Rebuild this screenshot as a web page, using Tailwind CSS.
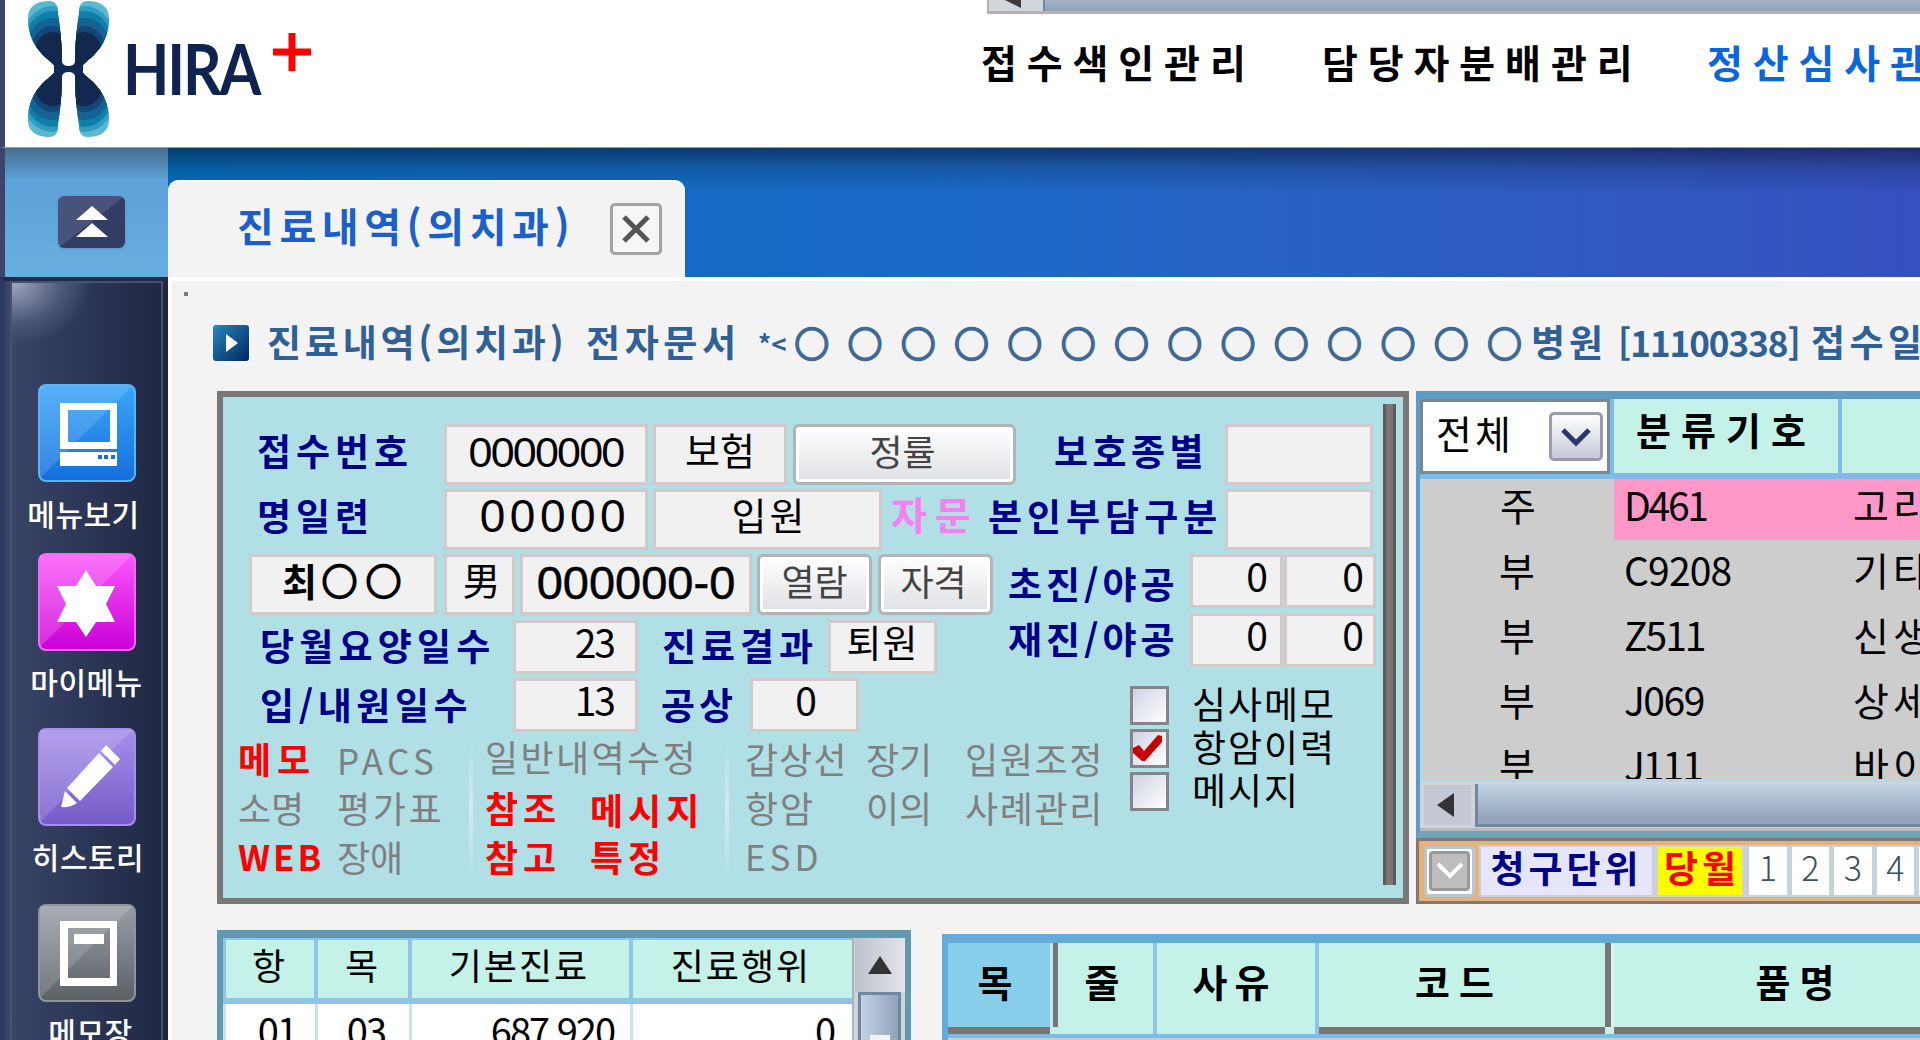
<!DOCTYPE html>
<html lang="ko">
<head>
<meta charset="utf-8">
<title>HIRA+</title>
<script src="https://cdn.jsdelivr.net/npm/@tailwindcss/browser@4"></script>
</head>
<body class="overflow-hidden bg-[#f3f3f3]">
<div class="flex h-[1040px] w-[1920px] flex-col overflow-hidden whitespace-nowrap bg-[#f3f3f3] font-['Noto_Sans_CJK_KR',sans-serif] text-[38px] leading-none text-black **:shrink-0">

  <!-- header -->
  <header class="flex h-[148px] border-b border-[#8aa3b8] border-l-[5px] border-l-[#3c446c] bg-white">
    <svg class="ml-[22px] h-[138px] w-[84px]" viewBox="0 0 84 138">
      <defs>
        <clipPath id="lobe"><path d="M1 18C1 5 12 1 22 1C29 1 31 5 31 14C34 34 35 48 35 65H27C22 59 1 48 1 18Z"/></clipPath>
        <g id="quarter" clip-path="url(#lobe)">
          <rect width="42" height="70" fill="#5bb8d3"/>
          <ellipse cx="25" cy="48" rx="32" ry="42" fill="#2f9dc0"/>
          <ellipse cx="25" cy="49" rx="29" ry="38" fill="#0f7fa9"/>
          <ellipse cx="25" cy="50" rx="26" ry="32" fill="#156394"/>
          <ellipse cx="25" cy="51" rx="21" ry="25" fill="#14467a"/>
          <ellipse cx="26" cy="52" rx="18" ry="20" fill="#12284f"/>
        </g>
      </defs>
      <use href="#quarter"/>
      <use href="#quarter" transform="translate(83 0) scale(-1 1)"/>
      <use href="#quarter" transform="translate(0 138) scale(1 -1)"/>
      <use href="#quarter" transform="translate(83 138) scale(-1 -1)"/>
      <path d="M27 63Q33 66 35 62Q36 66 41.500 66Q47 66 48 62Q50 66 56 63V75Q50 72 48 76Q47 72 41.500 72Q36 72 35 76Q33 72 27 75Z" fill="#12284f"/>
    </svg>
    <div class="ml-[12px] mt-[33px] w-[150px] origin-left scale-x-[.86] font-['Lato'] text-[70px] font-bold tracking-[-2.5px] text-[#0f2350]">HIRA</div>
    <svg class="mt-[33px] h-[38px] w-[38px]" viewBox="0 0 38 38"><path d="M19 0V38M0 19H38" stroke="#ff0000" stroke-width="7"/></svg>
    <div class="ml-[676px] flex w-[933px] flex-col">
      <div class="flex h-[14px] border-b-[3px] border-l-2 border-[#b5b0b4] bg-[#d2d5da]">
        <svg class="h-[11px] w-[54px]" viewBox="0 0 54 11"><path d="M16 0H32V8Z" fill="#3a3a3a"/></svg>
        <div class="h-[11px] w-[877px] border-l-2 border-[#6f88a5] bg-linear-to-b from-[#a5b5c8] to-[#8fa2b8]"></div>
      </div>
      <nav class="mt-[28px] flex text-[39px] font-bold">
        <span class="-ml-[6px] w-[341px] tracking-[9.9px]">접수색인관리</span>
        <span class="w-[385px] tracking-[9.9px]">담당자분배관리</span>
        <span class="tracking-[9.9px] text-[#0a66dc]">정산심사관리</span>
      </nav>
    </div>
  </header>

  <!-- tab bar -->
  <div class="flex h-[129px] border-l-[5px] border-[#3c446c] bg-linear-to-r from-[#0070bd] via-[#1a69c6] via-50% to-[#3650be]">
    <div class="flex h-[129px] w-full bg-linear-to-b from-black/45 via-black/15 via-16% to-transparent to-35%">
      <div class="flex h-[129px] w-[163px] bg-linear-to-b from-[#486f90] via-[#5da2d8] via-25% to-[#67aee0]">
        <div class="ml-[53px] mt-[48px] flex h-[52px] w-[67px] items-center justify-center rounded-[6px] bg-linear-to-br from-[#48527a] from-50% to-[#333d63] to-50% shadow">
          <svg class="h-[32px] w-[34px]" viewBox="0 0 34 32"><path d="M17 0L33 14H1ZM17 17L33 31H1Z" fill="#fff"/></svg>
        </div>
      </div>
      <div class="mt-[32px] flex h-[97px] w-[517px] rounded-t-[10px] border-t-2 border-white bg-[#f3f3f3]">
        <span class="ml-[69px] mt-[23px] w-[373px] text-[40px] font-bold tracking-[5.6px] text-[#1a5fca]">진료내역(의치과)</span>
        <div class="mt-[21px] flex h-[52px] w-[52px] items-center justify-center rounded-[5px] border-[3px] border-[#a3a3a3] bg-[#f6f6f6]">
          <svg class="h-[28px] w-[28px]" viewBox="0 0 28 28"><path d="M2 2L26 26M26 2L2 26" stroke="#555" stroke-width="5"/></svg>
        </div>
      </div>
    </div>
  </div>

  <div class="flex h-[763px]">
    <!-- sidebar -->
    <aside class="flex h-[763px] w-[168px] flex-col border-l-[5px] border-t-4 border-l-[#2e3961] border-t-[#222a4a] bg-linear-to-r from-[#3b4569] to-[#1e2742] text-[30px] font-medium text-white">
      <div class="ml-[5px] flex h-[759px] w-[153px] flex-col border-x-2 border-t-2 border-[#475173] bg-[radial-gradient(ellipse_80px_62px_at_0_0,#a3a8bd_0,#4a5578_65%,transparent_100%)]">
        <svg class="ml-[26px] mt-[101px] h-[98px] w-[98px]" viewBox="0 0 98 98">
          <defs><linearGradient id="g1" x2="0" y2="1"><stop stop-color="#3ba6f7"/><stop offset="1" stop-color="#156fdc"/></linearGradient></defs>
          <rect x="1" y="1" width="96" height="96" rx="7" fill="url(#g1)" stroke="#5cb2f5" stroke-width="2"/>
          <path d="M2 2H94L2 94Z" fill="#fff" opacity=".14"/>
          <path fill-rule="evenodd" fill="#fff" d="M22 19H79V65H22ZM30 26V58H72V26Z"/><path fill="#fff" d="M22 68H79V82H22Z"/>
          <path d="M60 73h4M66 73h4M73 73h4" stroke="#1a70cf" stroke-width="4"/>
        </svg>
        <span class="mt-[16px] w-[143px] text-center tracking-[0.5px]">메뉴보기</span>
        <svg class="ml-[26px] mt-[25px] h-[98px] w-[98px]" viewBox="0 0 98 98">
          <defs><linearGradient id="g2" x2="0" y2="1"><stop stop-color="#fa58fa"/><stop offset="1" stop-color="#cb00d8"/></linearGradient></defs>
          <rect x="1" y="1" width="96" height="96" rx="7" fill="url(#g2)" stroke="#f06af4" stroke-width="2"/>
          <path d="M2 2H94L2 94Z" fill="#fff" opacity=".16"/>
          <path fill="#fff" d="M48 17L58 33H77L68 51L77 69H58L48 84L38 69H19L28 51L19 33H38Z"/>
        </svg>
        <span class="mt-[15px] w-[149px] text-center tracking-[0.5px]">마이메뉴</span>
        <svg class="ml-[26px] mt-[32px] h-[98px] w-[98px]" viewBox="0 0 98 98">
          <defs><linearGradient id="g3" x2="0" y2="1"><stop stop-color="#a690ea"/><stop offset="1" stop-color="#745bc8"/></linearGradient></defs>
          <rect x="1" y="1" width="96" height="96" rx="7" fill="url(#g3)" stroke="#a490ea" stroke-width="2"/>
          <path d="M2 2H94L2 94Z" fill="#fff" opacity=".15"/>
          <path fill="#fff" d="M68 17L82 31L77 37L63 23ZM61 25L75 39L42 73L29 60ZM27 63L39 75Q32 80 23 79Z"/>
        </svg>
        <span class="mt-[15px] w-[152px] text-center tracking-[0.5px]">히스토리</span>
        <svg class="ml-[26px] mt-[33px] h-[98px] w-[98px]" viewBox="0 0 98 98">
          <defs><linearGradient id="g4" x2="0" y2="1"><stop stop-color="#98a0a6"/><stop offset="1" stop-color="#5b6067"/></linearGradient></defs>
          <rect x="1" y="1" width="96" height="96" rx="7" fill="url(#g4)" stroke="#8f969b" stroke-width="2"/>
          <path d="M2 2H94L2 94Z" fill="#fff" opacity=".15"/>
          <path fill-rule="evenodd" fill="#fff" d="M22 17H79V82H22ZM30 24V74H72V24Z"/><path fill="#fff" d="M36 30H66V40H36Z"/>
        </svg>
        <span class="mt-[14px] w-[157px] text-center tracking-[0.5px]">메모장</span>
      </div>
    </aside>

    <!-- content -->
    <main class="flex h-[763px] w-[1752px] flex-col border-l-4 border-t-4 border-white">
      <div class="ml-[12px] mt-[11px] h-[4px] w-[4px] bg-[#70808c]"></div>

      <div class="ml-[41px] mt-[24px] flex h-[50px] items-center text-[37px] font-bold text-[#2f6096]">
        <svg class="-mt-[4px] h-[36px] w-[36px]" viewBox="0 0 36 36">
          <defs><linearGradient id="g5" x2="1" y2="1"><stop stop-color="#2a86bf"/><stop offset="1" stop-color="#00285f"/></linearGradient></defs>
          <rect width="36" height="36" rx="3" fill="url(#g5)"/><path d="M13 9L25 18L13 27Z" fill="#fff"/>
        </svg>
        <span class="-mt-[7px] ml-[18px] w-[319px] tracking-[3.8px]">진료내역(의치과)</span>
        <span class="-mt-[7px] w-[172px] tracking-[4.6px]">전자문서</span>
        <span class="-mt-[4px] w-[27px] text-[26px]">*&lt;</span>
        <div class="-mt-[5px] flex w-[746px] text-center text-[34px] font-normal text-[#416998] [-webkit-text-stroke:2.5px_#416998] *:w-[53.3px]">
          <span>○</span><span>○</span><span>○</span><span>○</span><span>○</span><span>○</span><span>○</span><span>○</span><span>○</span><span>○</span><span>○</span><span>○</span><span>○</span><span>○</span>
        </div>
        <span class="-mt-[7px] w-[87px] tracking-[4px]">병원</span>
        <span class="-mt-[7px] w-[193px] text-[35px] tracking-[-1px]">[11100338]</span>
        <span class="-mt-[7px] tracking-[4.5px]">접수일</span>
      </div>

      <div class="ml-[45px] mt-[21px] flex h-[513px]">
        <!-- claim panel -->
        <section class="flex h-[513px] w-[1192px] border-[6px] border-[#797777] bg-[#b0e0e6]">
          <div class="flex w-[1160px] flex-col">
            <div class="mt-[27px] flex h-[61px] items-center">
              <span class="-mt-[8px] ml-[34px] w-[187px] text-[37px] font-bold tracking-[5px] text-[#00008b]">접수번호</span>
              <div class="flex h-[61px] w-[204px] items-center justify-center border-[3px] border-[#d3c8ca] bg-[#f1f1f1] pb-[5px] font-['Liberation_Sans'] text-[43px] tracking-[-1.8px]">0000000</div>
              <div class="ml-[5px] flex h-[61px] w-[134px] items-center justify-center border-[3px] border-[#d3c8ca] bg-[#f1f1f1] pb-[12px]">보험</div>
              <button class="ml-[6px] flex h-[61px] w-[223px] items-center justify-center rounded-[6px] border-[3px] border-[#b5b3b5] bg-linear-to-b from-white to-[#dfe0e4] pb-[10px] pr-[4px] text-[36px] text-[#444] ring-3 ring-inset ring-white">정률</button>
              <span class="-mt-[8px] ml-[38px] w-[171px] text-[37px] font-bold tracking-[4.5px] text-[#00008b]">보호종별</span>
              <div class="h-[61px] w-[148px] border-[3px] border-[#d3c8ca] bg-[#f1f1f1]"></div>
            </div>
            <div class="mt-[4px] flex h-[61px] items-center">
              <span class="-mt-[8px] ml-[34px] w-[187px] text-[37px] font-bold tracking-[5px] text-[#00008b]">명일련</span>
              <div class="flex h-[61px] w-[204px] items-center justify-center border-[3px] border-[#d3c8ca] bg-[#f1f1f1] pb-[8px] pl-[18px] font-['Liberation_Sans'] text-[46px] tracking-[4.5px]">00000</div>
              <div class="ml-[5px] flex h-[61px] w-[229px] items-center justify-center border-[3px] border-[#d3c8ca] bg-[#f1f1f1] pb-[12px] pl-[4px] tracking-[3px]">입원</div>
              <span class="-mt-[12px] ml-[9px] w-[97px] text-[39px] font-bold tracking-[8px] text-[#f77ff0]">자문</span>
              <span class="-mt-[8px] w-[237px] text-[37px] font-bold tracking-[5px] text-[#00008b]">본인부담구분</span>
              <div class="h-[61px] w-[148px] border-[3px] border-[#d3c8ca] bg-[#f1f1f1]"></div>
            </div>

            <div class="mt-[4px] flex h-[184px]">
              <div class="flex w-[770px] flex-col">
                <div class="flex h-[61px] items-center">
                  <div class="ml-[26px] flex h-[61px] w-[188px] items-center border-[3px] border-[#d3c8ca] bg-[#f1f1f1] pb-[10px] pl-[30px]"><b>최</b><span class="ml-[5px] text-[35px] tracking-[9px] [-webkit-text-stroke:2.5px_#000]">○○</span></div>
                  <div class="ml-[7px] flex h-[61px] w-[71px] items-center justify-center border-[3px] border-[#d3c8ca] bg-[#f1f1f1] pb-[12px] pl-[4px]">男</div>
                  <div class="ml-[5px] flex h-[61px] w-[232px] items-center justify-center border-[3px] border-[#d3c8ca] bg-[#f1f1f1] pb-[5px] font-['Liberation_Sans'] text-[47px] [-webkit-text-stroke:0.5px_#000]">000000-0</div>
                  <button class="ml-[5px] flex h-[61px] w-[115px] items-center justify-center rounded-[6px] border-[3px] border-[#b5b3b5] bg-linear-to-b from-white to-[#dfe0e4] pb-[10px] text-[36px] text-[#444] ring-3 ring-inset ring-white">열람</button>
                  <button class="ml-[6px] flex h-[61px] w-[115px] items-center justify-center rounded-[6px] border-[3px] border-[#b5b3b5] bg-linear-to-b from-white to-[#dfe0e4] pb-[10px] pr-[4px] text-[36px] text-[#444] ring-3 ring-inset ring-white">자격</button>
                </div>
                <div class="mt-[5px] flex h-[54px] items-center">
                  <span class="-mt-[4px] ml-[37px] w-[253px] text-[37px] font-bold tracking-[5.2px] text-[#00008b]">당월요양일수</span>
                  <div class="flex h-[54px] w-[125px] items-center justify-end border-[3px] border-[#d3c8ca] bg-[#f1f1f1] pb-[12px] pr-[21px] text-[39px] tracking-[-2px]">23</div>
                  <span class="-mt-[4px] ml-[24px] w-[166px] text-[37px] font-bold tracking-[5px] text-[#00008b]">진료결과</span>
                  <div class="flex h-[54px] w-[109px] items-center justify-center border-[3px] border-[#d3c8ca] bg-[#f1f1f1] pb-[12px] tracking-[1px]">퇴원</div>
                </div>
                <div class="mt-[4px] flex h-[54px] items-center">
                  <span class="-mt-[2px] ml-[37px] w-[253px] text-[37px] font-bold tracking-[4.6px] text-[#00008b]">입/내원일수</span>
                  <div class="flex h-[54px] w-[125px] items-center justify-end border-[3px] border-[#d3c8ca] bg-[#f1f1f1] pb-[12px] pr-[21px] text-[39px] tracking-[-2px]">13</div>
                  <span class="-mt-[2px] ml-[23px] w-[89px] text-[37px] font-bold tracking-[4px] text-[#00008b]">공상</span>
                  <div class="flex h-[54px] w-[109px] items-center justify-center border-[3px] border-[#d3c8ca] bg-[#f1f1f1] pb-[12px] pl-[3px] text-[39px]">0</div>
                </div>
              </div>
              <div class="flex w-[390px] flex-col">
                <div class="flex h-[54px] items-center">
                  <span class="ml-[15px] mt-[4px] w-[182px] text-[37px] font-bold tracking-[4px] text-[#00008b]">초진/야공</span>
                  <div class="flex h-[54px] w-[93px] items-center justify-end border-[3px] border-[#d3c8ca] bg-[#f1f1f1] pb-[12px] pr-[12px] text-[39px]">0</div>
                  <div class="ml-px flex h-[54px] w-[92px] items-center justify-end border-[3px] border-[#d3c8ca] bg-[#f1f1f1] pb-[12px] pr-[9px] text-[39px]">0</div>
                </div>
                <div class="mt-[5px] flex h-[54px] items-center">
                  <span class="-mt-[3px] ml-[15px] w-[182px] text-[37px] font-bold tracking-[4px] text-[#00008b]">재진/야공</span>
                  <div class="flex h-[54px] w-[93px] items-center justify-end border-[3px] border-[#d3c8ca] bg-[#f1f1f1] pb-[12px] pr-[12px] text-[39px]">0</div>
                  <div class="ml-px flex h-[54px] w-[92px] items-center justify-end border-[3px] border-[#d3c8ca] bg-[#f1f1f1] pb-[12px] pr-[9px] text-[39px]">0</div>
                </div>
                <div class="ml-[137px] mt-[19px] flex flex-col gap-[4px] text-[37px]">
                  <label class="flex h-[39px] items-center"><i class="mr-[23px] h-[39px] w-[39px] border-[3px] border-[#868489] bg-linear-to-br from-[#cfd2e4] to-white"></i><span class="-mt-[5px] tracking-[2px]">심사메모</span></label>
                  <label class="flex h-[39px] items-center"><i class="mr-[23px] h-[39px] w-[39px] border-[3px] border-[#868489] bg-linear-to-br from-[#cfd2e4] to-white"><svg class="h-[33px] w-[33px]" viewBox="0 0 33 33"><path d="M0 16L6 13L11 19L25 3L29 4V10L12 29H9L0 21Z" fill="#c80000"/></svg></i><span class="-mt-[5px] tracking-[2px]">항암이력</span></label>
                  <label class="flex h-[39px] items-center"><i class="mr-[23px] h-[39px] w-[39px] border-[3px] border-[#868489] bg-linear-to-br from-[#cfd2e4] to-white"></i><span class="-mt-[5px] tracking-[2px]">메시지</span></label>
                </div>
              </div>
            </div>

            <!-- shortcut links -->
            <div class="-mt-[5px] ml-[15px] flex h-[150px] w-[890px] text-[36px] text-[#7f7f7f]">
              <div class="grid h-[147px] w-[231px] grid-cols-[99px_132px] grid-rows-3 items-center">
                <span class="font-bold tracking-[6px] text-[#ff0000]">메모</span><span class="mt-[4px] text-[35px] tracking-[4.5px]">PACS</span>
                <span>소명</span><span class="tracking-[2.6px]">평가표</span>
                <span class="text-[35px] font-bold tracking-[3px] text-[#ff0000]">WEB</span><span>장애</span>
              </div>
              <div class="mt-[10px] h-[135px] w-[4px] bg-linear-to-b from-transparent via-[#d5e8f8] to-transparent"></div>
              <div class="grid h-[147px] w-[252px] grid-cols-[105px_120px] grid-rows-3 items-center pl-[12px] font-bold text-[#ff0000]">
                <span class="col-span-2 -mt-[4px] font-normal tracking-[2.4px] text-[#7f7f7f]">일반내역수정</span>
                <span class="tracking-[5px]">참조</span><span class="mt-[4px] tracking-[5px]">메시지</span>
                <span class="tracking-[5px]">참고</span><span class="tracking-[5px]">특정</span>
              </div>
              <div class="mt-[10px] h-[135px] w-[4px] bg-linear-to-b from-transparent via-[#d5e8f8] to-transparent"></div>
              <div class="grid h-[147px] grid-cols-[121px_99px_150px] grid-rows-3 items-center pl-[16px]">
                <span class="tracking-[1px]">갑상선</span><span>장기</span><span class="tracking-[1.6px]">입원조정</span>
                <span class="tracking-[2px]">항암</span><span>이의</span><span class="tracking-[1.6px]">사례관리</span>
                <span class="text-[35px] tracking-[4px]">ESD</span>
              </div>
            </div>
          </div>
          <div class="mt-[7px] h-[481px] w-[13px] border-x-[3px] border-[#5f5b5b] bg-[#7a7676]"></div>
        </section>

        <!-- diagnosis panel -->
        <section class="ml-[7px] flex h-[513px] w-[504px] flex-col">
          <div class="flex h-[447px] flex-col border-b-[7px] border-l-4 border-t-[8px] border-[#5d9cc4] border-b-[#6fa3b7]">
            <div class="flex h-[80px] border-b-[6px] border-[#7dbce6] bg-[#7dbce6]">
              <div class="flex h-[75px] w-[190px] items-center border-[3px] border-[#7c8690] bg-white">
                <span class="-mt-[8px] ml-[13px] w-[113px] text-[39px] tracking-[3px]">전체</span>
                <div class="flex h-[49px] w-[54px] items-center justify-center rounded-[5px] border-[3px] border-[#9a9aae] bg-linear-to-b from-white to-[#c6c8da]">
                  <svg class="h-[20px] w-[32px]" viewBox="0 0 32 20"><path d="M3 3L16 16L29 3" fill="none" stroke="#2b3768" stroke-width="5"/></svg>
                </div>
              </div>
              <div class="ml-[4px] flex h-[74px] w-[224px] items-center justify-center bg-[#c5f2e8] pb-[14px] font-bold tracking-[10px]">분류기호</div>
              <div class="ml-[4px] h-[74px] w-[80px] bg-[#c5f2e8]"></div>
            </div>
            <div class="flex h-[300px] flex-col overflow-hidden border-l-2 border-[#b0d8f0] bg-[#cdcdcd] text-[39px]">
              <div class="flex h-[61px] items-center"><span class="w-[192px] pb-[10px] text-center">주</span><div class="flex h-[61px] w-[308px] items-center bg-[#ff97c9] pb-[10px]"><span class="ml-[10px] w-[229px] tracking-[-2.3px]">D461</span><span class="tracking-[4px]">고리</span></div></div>
              <div class="mt-[4px] flex h-[61px] items-center pb-[10px]"><span class="w-[202px] pr-[12px] text-center">부</span><span class="w-[229px] tracking-[-0.8px]">C9208</span><span class="tracking-[4px]">기타</span></div>
              <div class="mt-[4px] flex h-[61px] items-center pb-[10px]"><span class="w-[202px] pr-[12px] text-center">부</span><span class="w-[229px] tracking-[-2px]">Z511</span><span class="tracking-[4px]">신생</span></div>
              <div class="mt-[4px] flex h-[61px] items-center pb-[10px]"><span class="w-[202px] pr-[12px] text-center">부</span><span class="w-[229px] tracking-[-1.5px]">J069</span><span class="tracking-[4px]">상세</span></div>
              <div class="mt-[4px] flex h-[61px] items-center pb-[10px]"><span class="w-[202px] pr-[12px] text-center">부</span><span class="w-[229px] tracking-[-2px]">J111</span><span class="tracking-[4px]">바이</span></div>
            </div>
            <div class="flex h-[52px] border-y-[3px] border-t-[#b0d8f0] border-b-[#bdb9bd] bg-[#d4d2d7]">
              <div class="ml-[4px] mt-[3px] flex h-[40px] w-[47px] items-center bg-[#c3c8d2]"><svg class="ml-[13px] h-[24px] w-[18px]" viewBox="0 0 18 24"><path d="M17 0V24L0 12Z" fill="#333"/></svg></div>
              <div class="ml-[4px] mt-[2px] h-[43px] w-[450px] border-b-[3px] border-l-[3px] border-[#71869f] bg-linear-to-b from-[#c3d3e6] to-[#93a6bb] to-85%"></div>
            </div>
          </div>
          <div class="flex h-[66px] items-center border-y-[3px] border-l-[3px] border-[#85786e] bg-[#e2b47c]">
            <div class="ml-[5px] flex h-[51px] w-[51px] items-center justify-center rounded-[5px] border-[3px] border-[#b9c6d2] bg-white"><div class="flex h-[40px] w-[41px] items-center justify-center rounded-[4px] border-[3px] border-[#999] bg-[#bdbdbd]"><svg class="h-[18px] w-[28px]" viewBox="0 0 28 18"><path d="M2 2L14 14L26 2" fill="none" stroke="#fff" stroke-width="4"/></svg></div></div>
            <div class="ml-[4px] flex h-[52px] w-[175px] items-center justify-center border-2 border-[#d5cbd8] bg-[#e6e6fa] pb-[7px] text-[37px] font-bold tracking-[4px] text-[#00008b]">청구단위</div>
            <div class="flex h-[52px] w-[92px] items-center justify-center border-x-[4px] border-y-2 border-[#ccd2d8] bg-[#ffff00] pb-[7px] pl-[4px] text-[37px] font-bold tracking-[4px] text-[#ff0000]">당월</div>
            <div class="flex h-[52px] w-[180px] items-center gap-[5px] bg-[#c5d2dc] pl-[3px] text-center text-[34px] font-light text-[#3a5258] *:h-[48px] *:w-[37.5px] *:bg-white *:pt-[3px]">
              <span>1</span><span>2</span><span>3</span><span>4</span><span></span>
            </div>
          </div>
        </section>
      </div>

      <div class="ml-[45px] mt-[26px] flex h-[120px]">
        <!-- summary table -->
        <section class="flex h-[130px] w-[694px] border-x-[6px] border-t-[8px] border-[#6199b0] bg-white">
          <div class="flex w-[629px] flex-col">
            <div class="flex h-[66px] gap-[4px] border-b-[6px] border-l-[3px] border-t-2 border-[#8fc4e6] bg-[#8fc4e6] text-[36px] *:flex *:items-center *:justify-center *:bg-[#c5f2e8] *:pb-[10px] *:pr-[3px]">
              <div class="w-[88px]">항</div><div class="w-[90px]">목</div><div class="w-[217px] tracking-[2px]">기본진료</div><div class="w-[219px] tracking-[2px]">진료행위</div>
            </div>
            <div class="flex h-[60px] gap-[3px] border-l-[3px] border-[#c8e2f4] bg-[#c8e2f4] text-right text-[38px] tracking-[-2px] *:bg-white *:pt-[7px]">
              <div class="w-[89px] pr-[19px]">01</div><div class="w-[91px] pr-[24px]">03</div><div class="w-[218px] pr-[16px]">687,920</div><div class="w-[219px] pr-[18px]">0</div>
            </div>
          </div>
          <div class="flex w-[53px] flex-col items-center border-l-2 border-[#a9b4c0] bg-[#cfd3da]">
            <div class="flex h-[54px] w-[50px] items-center justify-center bg-linear-to-r from-[#bcc3cc] to-[#e4e4e8]"><svg class="h-[18px] w-[24px]" viewBox="0 0 24 18"><path d="M12 0L24 18H0Z" fill="#333"/></svg></div>
            <div class="flex h-[70px] w-[43px] flex-col items-center border-[3px] border-[#71869f] bg-linear-to-r from-[#c3d3e6] to-[#8fa3b9]"><div class="mt-[40px] h-[5px] w-[20px] bg-[#eef4fa]"></div></div>
          </div>
        </section>

        <!-- detail table -->
        <section class="ml-[31px] mt-[4px] flex h-[120px] w-[978px] flex-col border-l-[6px] border-t-[9px] border-[#64aadb] bg-[#c9ccd0]">
          <div class="flex h-[95px] border-b-[4px] border-[#7dbce6] bg-[#c5f2e8] font-bold *:flex *:h-[91px] *:items-center *:justify-center">
            <div class="w-[102px] border-b-[7px] border-[#7a7474] bg-[#87ceeb] pb-[9px] pr-[8px]">목</div>
            <div class="h-[84px]! w-[8px] border-l-[3px] border-l-[#bfe9f0] bg-[#7a7474]"></div>
            <div class="w-[99px] border-r-4 border-[#8fc4e6] pb-[16px] pr-[7px]">줄</div>
            <div class="w-[162px] border-r-4 border-[#8fc4e6] pb-[16px] pr-[3px] tracking-[7px]">사유</div>
            <div class="w-[286px] border-b-[7px] border-[#7a7474] pb-[9px] pr-[6px] tracking-[9px]">코드</div>
            <div class="h-[84px]! w-[9px] border-r-[3px] border-r-[#d8f6f0] bg-[#7a7474]"></div>
            <div class="w-[380px] border-b-[7px] border-[#7a7474] pb-[9px] pr-[9px] tracking-[9px]">품명</div>
          </div>
        </section>
      </div>
    </main>
  </div>
</div>
</body>
</html>
